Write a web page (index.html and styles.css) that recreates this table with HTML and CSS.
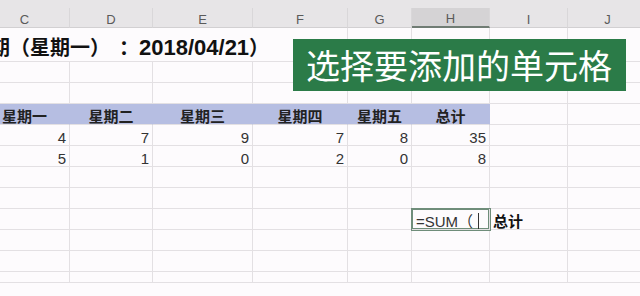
FILE: index.html
```html
<!DOCTYPE html>
<html lang="zh">
<head>
<meta charset="utf-8">
<link rel="stylesheet" href="styles.css">
</head>
<body>
<div class="sheet">
  <div class="topstrip"></div>
  <div class="row colhead">
    <div class="cell">C</div><div class="cell">D</div><div class="cell">E</div><div class="cell">F</div><div class="cell">G</div><div class="cell sel">H</div><div class="cell">I</div><div class="cell">J</div>
  </div>
  <div class="row title">
    <div class="cell title-cell"><span class="title-text">期（星期一）<span class="sep">：</span><span class="date">2018/04/21</span>）</span></div>
    <div class="cell"></div><div class="cell"></div><div class="cell"></div><div class="cell"></div>
  </div>
  <div class="row"><div class="cell"></div><div class="cell"></div><div class="cell"></div><div class="cell"></div><div class="cell"></div><div class="cell"></div><div class="cell"></div><div class="cell"></div></div>
  <div class="row"><div class="cell"></div><div class="cell"></div><div class="cell"></div><div class="cell"></div><div class="cell"></div><div class="cell"></div><div class="cell"></div><div class="cell"></div></div>
  <div class="row thead">
    <div class="cell th">星期一</div><div class="cell th">星期二</div><div class="cell th">星期三</div><div class="cell th">星期四</div><div class="cell th">星期五</div><div class="cell th">总计</div><div class="cell"></div><div class="cell"></div>
  </div>
  <div class="row data">
    <div class="cell num">4</div><div class="cell num">7</div><div class="cell num">9</div><div class="cell num">7</div><div class="cell num">8</div><div class="cell num">35</div><div class="cell"></div><div class="cell"></div>
  </div>
  <div class="row data">
    <div class="cell num">5</div><div class="cell num">1</div><div class="cell num">0</div><div class="cell num">2</div><div class="cell num">0</div><div class="cell num">8</div><div class="cell"></div><div class="cell"></div>
  </div>
  <div class="row"><div class="cell"></div><div class="cell"></div><div class="cell"></div><div class="cell"></div><div class="cell"></div><div class="cell"></div><div class="cell"></div><div class="cell"></div></div>
  <div class="row"><div class="cell"></div><div class="cell"></div><div class="cell"></div><div class="cell"></div><div class="cell"></div><div class="cell"></div><div class="cell"></div><div class="cell"></div></div>
  <div class="row data">
    <div class="cell"></div><div class="cell"></div><div class="cell"></div><div class="cell"></div><div class="cell"></div>
    <div class="cell active"><span class="formula">=SUM（</span><span class="caret"></span></div>
    <div class="cell label">总计</div><div class="cell"></div>
  </div>
  <div class="row"><div class="cell"></div><div class="cell"></div><div class="cell"></div><div class="cell"></div><div class="cell"></div><div class="cell"></div><div class="cell"></div><div class="cell"></div></div>
  <div class="row"><div class="cell"></div><div class="cell"></div><div class="cell"></div><div class="cell"></div><div class="cell"></div><div class="cell"></div><div class="cell"></div><div class="cell"></div></div>
  <div class="row short"><div class="cell"></div><div class="cell"></div><div class="cell"></div><div class="cell"></div><div class="cell"></div><div class="cell"></div><div class="cell"></div><div class="cell"></div></div>
  <div class="banner">选择要添加的单元格</div>
</div>
</body>
</html>
```

FILE: styles.css
```css
html, body {
  margin: 0;
  padding: 0;
  width: 640px;
  height: 296px;
  overflow: hidden;
  background: #fdfbfd;
  font-family: "Liberation Sans", "Noto Sans CJK SC", sans-serif;
}

.sheet {
  position: relative;
  margin-left: -20px;
  width: 668px;
}

.topstrip {
  height: 8px;
  background: #e7e5e7;
}

.row {
  display: grid;
  grid-template-columns: 90px 83px 100px 95px 64px 78px 78px 80px;
  height: 21px;
}

.row.short {
  height: 11px;
}

.cell {
  box-sizing: border-box;
  border-right: 1px solid #e3e0e3;
  border-bottom: 1px solid #e3e0e3;
  font-size: 15px;
  color: #333;
  display: flex;
  align-items: flex-end;
  padding: 0 3px 0;
  white-space: nowrap;
  line-height: 15px;
}

.colhead {
  height: 20px;
  background: #e7e5e7;
}

.colhead .cell {
  justify-content: center;
  align-items: center;
  font-size: 13px;
  color: #5a5a5a;
  border-right: 1px solid #d9d7d9;
  border-bottom: 1px solid #d2d0d2;
  padding: 3px 0 0;
}

.colhead .cell.sel {
  background: #d5d3d5;
  border-bottom: 2px solid #707c74;
}

.title {
  height: 34px;
}

.title-cell {
  grid-column: span 4;
  padding: 0 0 1px 10px;
  overflow: visible;
}

.title-text {
  font-size: 20px;
  font-weight: bold;
  color: #111;
  line-height: 24px;
  text-spacing-trim: space-all;
}

.sep {
  margin-left: 9px;
}

.date {
  font-size: 22px;
}

.thead .th {
  background: #b6bee2;
  border-right-color: #b6bee2;
  border-bottom-color: #e3e0e3;
  justify-content: center;
  font-weight: bold;
  color: #222;
}

.num {
  justify-content: flex-end;
}

.active {
  box-shadow: 0 0 0 1px #6f8d7a, inset 0 0 0 1px #6f8d7a;
  position: relative;
  padding-left: 4px;
}

.formula {
  color: #333;
}

.caret {
  display: inline-block;
  width: 1px;
  height: 16px;
  background: #333;
  margin: 0 0 0 5px;
}

.label {
  font-weight: bold;
  color: #111;
}

.banner {
  position: absolute;
  left: 313px;
  top: 39px;
  width: 333px;
  height: 52px;
  box-sizing: border-box;
  background: #2b7b48;
  color: #fff;
  font-family: "Noto Sans CJK SC", sans-serif;
  font-size: 34px;
  line-height: 52px;
  padding-left: 13px;
  white-space: nowrap;
}
```
